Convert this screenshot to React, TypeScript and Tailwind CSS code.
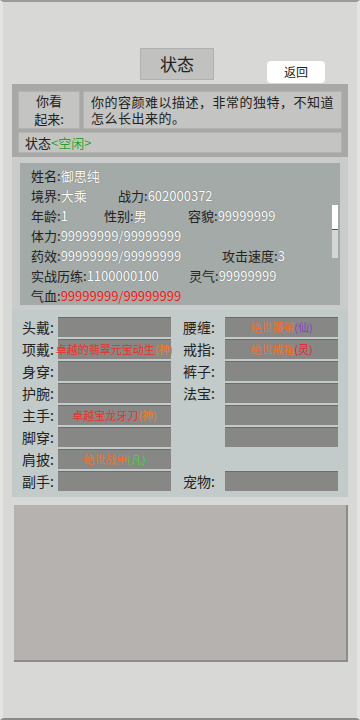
import React from 'react';

type Slot = { label?: string; name?: string; nameColor?: string; tag?: string; tagColor?: string; empty?: boolean };

const leftSlots: Slot[] = [
    { label: '头戴' },
    { label: '项戴', name: '卓越的翡翠元宝动生', nameColor: 'text-[#e8322a]', tag: '(神)', tagColor: 'text-[#f07a2a]' },
    { label: '身穿' },
    { label: '护腕' },
    { label: '主手', name: '卓越宝龙牙刀', nameColor: 'text-[#e8322a]', tag: '(神)', tagColor: 'text-[#f07a2a]' },
    { label: '脚穿' },
    { label: '肩披', name: '绝世战甲', nameColor: 'text-[#f0702a]', tag: '(凡)', tagColor: 'text-[#3fd43a]' },
    { label: '副手' },
];

const rightSlots: Slot[] = [
    { label: '腰缠', name: '绝世腰带', nameColor: 'text-[#f0702a]', tag: '(仙)', tagColor: 'text-[#8a3fd0]' },
    { label: '戒指', name: '绝世戒指', nameColor: 'text-[#f0702a]', tag: '(灵)', tagColor: 'text-[#e8202a]' },
    { label: '裤子' },
    { label: '法宝' },
    {},
    {},
    { empty: true },
    { label: '宠物' },
];

const valueShadow = '[text-shadow:0_0_1px_#555]';

const SlotRow = ({ slot, labelWidth }: { slot: Slot; labelWidth: string }) => {
    if (slot.empty) return <div className="h-[20px]"></div>;
    return (
        <div className="flex items-center h-[20px]">
            <div className={`${labelWidth} text-[14px] text-[#222] leading-none whitespace-nowrap`}>
                {slot.label ? `${slot.label}:` : ''}
            </div>
            <div className="w-[113px] h-[20px] bg-[#878886] border-t border-[#6c6d6b] flex items-center justify-center text-[11px] leading-none whitespace-nowrap">
                {slot.name && (
                    <>
                        <span className={slot.nameColor}>{slot.name}</span>
                        <span className={slot.tagColor}>{slot.tag}</span>
                    </>
                )}
            </div>
        </div>
    );
};

export default function App() {
    return (
        <div
            className="w-[360px] h-[720px] bg-[#d8d8d6] border-x-[3px] border-t-[2px] border-b-[2px] border-x-[#e4e4e2] border-t-[#9a9a98] border-b-[#8a8a88] overflow-hidden"
            style={{ fontFamily: '"Noto Sans CJK SC", "Noto Sans", sans-serif' }}
        >
            {/* Title row */}
            <div className="flex items-start h-[36px] mt-[46px]">
                <div className="ml-[137px] w-[74px] h-[32px] bg-[#c1c1bf] border border-[#b0b0ae] flex items-center justify-center text-[17px] text-[#222]">
                    状态
                </div>
                <button className="ml-[53px] mt-[13px] w-[58px] h-[22px] bg-white rounded-sm text-[12px] text-[#222] flex items-center justify-center">
                    返回
                </button>
            </div>

            {/* Appearance panel */}
            <div className="mx-[9px] bg-[#a8a9a7] px-[6px] pt-[7px] pb-[4px] flex flex-col gap-[3px]">
                <div className="flex gap-[3px] h-[38px]">
                    <div className="w-[62px] bg-[#c4c4c2] border border-[#b2b2b0] flex flex-col items-center justify-center text-[13px] leading-[18px] text-[#222]">
                        <span>你看</span>
                        <span>起来:</span>
                    </div>
                    <div className="flex-1 bg-[#c4c4c2] border border-[#b2b2b0] pl-[7px] pr-[3px] py-[2px] text-[13px] tracking-[0.5px] leading-[16px] text-[#222]">
                        你的容颜难以描述，非常的独特，不知道怎么长出来的。
                    </div>
                </div>
                <div className="h-[21px] bg-[#c4c4c2] border border-[#b2b2b0] flex items-center px-[6px] text-[13px] text-[#222]">
                    状态<span className="text-[#2e9a2e] [text-shadow:0_0_1px_#bff0bf]">&lt;空闲&gt;</span>
                </div>
            </div>

            {/* Info panel */}
            <div className="mx-[9px] bg-[#c9cccb] px-[8px] pt-[6px] pb-[5px]">
                <div className="relative h-[142px] bg-[#a3aaa8] pl-[11px] pt-[3px] text-[13px] leading-[20px] text-[#222]">
                    <div className="flex whitespace-nowrap">
                        <span>姓名:<span className={`text-white ${valueShadow}`}>御思纯</span></span>
                    </div>
                    <div className="flex whitespace-nowrap">
                        <span className="w-[87px]">境界:<span className={`text-white ${valueShadow}`}>大乘</span></span>
                        <span>战力:<span className={`text-white ${valueShadow}`}>602000372</span></span>
                    </div>
                    <div className="flex whitespace-nowrap">
                        <span className="w-[73px]">年龄:<span className={`text-white ${valueShadow}`}>1</span></span>
                        <span className="w-[84px]">性别:<span className={`text-white ${valueShadow}`}>男</span></span>
                        <span>容貌:<span className={`text-white ${valueShadow}`}>99999999</span></span>
                    </div>
                    <div className="flex whitespace-nowrap">
                        <span>体力:<span className={`text-white ${valueShadow}`}>99999999/99999999</span></span>
                    </div>
                    <div className="flex whitespace-nowrap">
                        <span className="w-[191px]">药效:<span className={`text-white ${valueShadow}`}>99999999/99999999</span></span>
                        <span>攻击速度:<span className={`text-white ${valueShadow}`}>3</span></span>
                    </div>
                    <div className="flex whitespace-nowrap">
                        <span className="w-[158px]">实战历练:<span className={`text-white ${valueShadow}`}>1100000100</span></span>
                        <span>灵气:<span className={`text-white ${valueShadow}`}>99999999</span></span>
                    </div>
                    <div className="flex whitespace-nowrap">
                        <span>气血:<span className="text-[#e01818] [text-shadow:0_0_1px_#f5b0b0]">99999999/99999999</span></span>
                    </div>
                    {/* scrollbar */}
                    <div className="absolute left-[312px] top-[42px] w-[6px] h-[53px] bg-[#d4d7d6] flex flex-col">
                        <div className="h-[25px] bg-white border-b border-[#555]"></div>
                    </div>
                </div>
            </div>

            {/* Equipment panel */}
            <div className="mx-[9px] bg-[#c3cbca] pl-[10px] pt-[7px] pb-[6px] flex gap-[12px]">
                <div className="flex flex-col gap-[2px]">
                    {leftSlots.map((s, i) => (
                        <SlotRow key={i} slot={s} labelWidth="w-[36px]" />
                    ))}
                </div>
                <div className="flex flex-col gap-[2px]">
                    {rightSlots.map((s, i) => (
                        <SlotRow key={i} slot={s} labelWidth="w-[42px]" />
                    ))}
                </div>
            </div>

            {/* Bottom panel */}
            <div className="ml-[11px] mr-[9px] mt-[8px] h-[157px] bg-[#b5b2af] border-r-2 border-b-2 border-[#8e8c89]"></div>
        </div>
    );
}
